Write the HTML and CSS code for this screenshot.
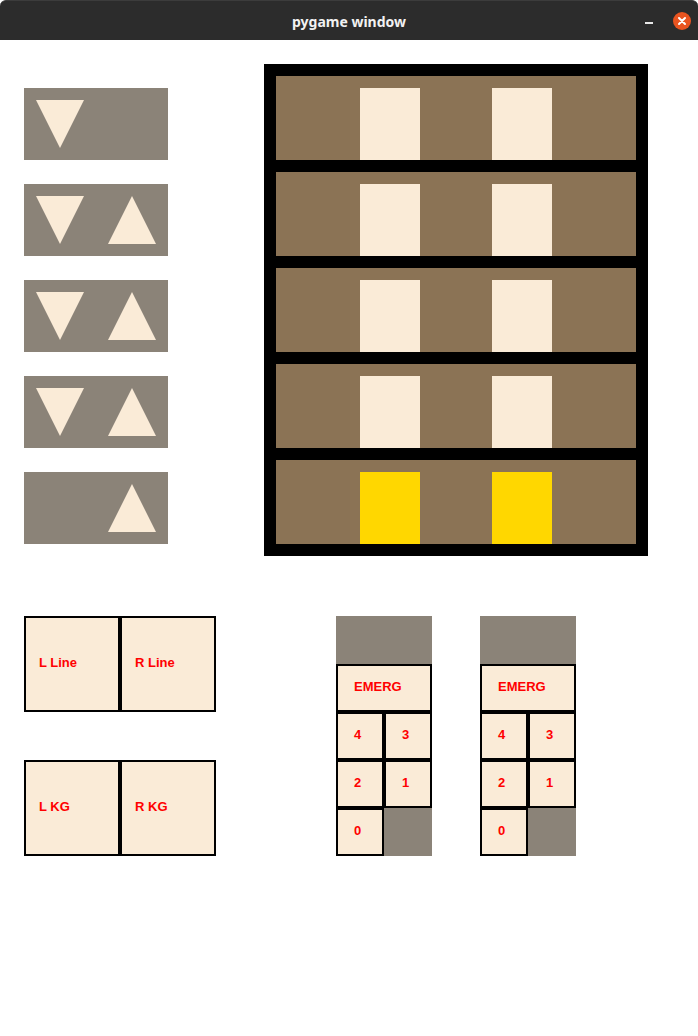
FILE: index.html
```html
<!DOCTYPE html>
<html>
<head>
<meta charset="utf-8">
<title>pygame window</title>
<link rel="stylesheet" href="styles.css">
</head>
<body>
<div class="window">
  <header class="titlebar">
    <span class="title">pygame window</span>
    <div class="controls">
      <span class="minimize"></span>
      <span class="close">
        <svg width="18" height="18" viewBox="0 0 18 18"><path d="M6 6 L12 12 M12 6 L6 12" stroke="#fff" stroke-width="2" stroke-linecap="round"/></svg>
      </span>
    </div>
  </header>
  <main class="canvas">
    <section class="top">
      <div class="callpanels">
        <div class="callpanel">
          <svg class="tri" viewBox="0 0 48 48"><polygon points="0,0 48,0 24,48"/></svg>
        </div>
        <div class="callpanel">
          <svg class="tri" viewBox="0 0 48 48"><polygon points="0,0 48,0 24,48"/></svg>
          <svg class="tri" viewBox="0 0 48 48"><polygon points="24,0 48,48 0,48"/></svg>
        </div>
        <div class="callpanel">
          <svg class="tri" viewBox="0 0 48 48"><polygon points="0,0 48,0 24,48"/></svg>
          <svg class="tri" viewBox="0 0 48 48"><polygon points="24,0 48,48 0,48"/></svg>
        </div>
        <div class="callpanel">
          <svg class="tri" viewBox="0 0 48 48"><polygon points="0,0 48,0 24,48"/></svg>
          <svg class="tri" viewBox="0 0 48 48"><polygon points="24,0 48,48 0,48"/></svg>
        </div>
        <div class="callpanel">
          <span class="tri-empty"></span>
          <svg class="tri" viewBox="0 0 48 48"><polygon points="24,0 48,48 0,48"/></svg>
        </div>
      </div>
      <div class="building">
        <div class="floor"><span class="door"></span><span class="door"></span></div>
        <div class="floor"><span class="door"></span><span class="door"></span></div>
        <div class="floor"><span class="door"></span><span class="door"></span></div>
        <div class="floor"><span class="door"></span><span class="door"></span></div>
        <div class="floor"><span class="door active"></span><span class="door active"></span></div>
      </div>
    </section>
    <section class="bottom">
      <div class="info">
        <div class="info-row">
          <div class="box big">L Line</div>
          <div class="box big">R Line</div>
        </div>
        <div class="info-row">
          <div class="box big">L KG</div>
          <div class="box big">R KG</div>
        </div>
      </div>
      <div class="keypads">
        <div class="keypad">
          <div class="box key wide">EMERG</div>
          <div class="box key">4</div>
          <div class="box key">3</div>
          <div class="box key">2</div>
          <div class="box key">1</div>
          <div class="box key">0</div>
        </div>
        <div class="keypad">
          <div class="box key wide">EMERG</div>
          <div class="box key">4</div>
          <div class="box key">3</div>
          <div class="box key">2</div>
          <div class="box key">1</div>
          <div class="box key">0</div>
        </div>
      </div>
    </section>
  </main>
</div>
</body>
</html>
```

FILE: styles.css
```css
* { box-sizing: border-box; }

html, body {
  margin: 0;
  padding: 0;
  background: #ffffff;
}

.window {
  width: 698px;
  height: 1036px;
  background: #ffffff;
}

.titlebar {
  height: 40px;
  background: #2c2c2c;
  border-top: 1px solid #3c3c3c;
  border-radius: 6px 6px 0 0;
  display: flex;
  align-items: center;
  justify-content: center;
  position: relative;
}

.title {
  color: #f2f2f2;
  font-family: "Noto Sans", "DejaVu Sans", sans-serif;
  font-weight: bold;
  font-size: 14px;
  margin-top: 1px;
}

.controls {
  position: absolute;
  right: 7px;
  top: 11px;
  display: flex;
  align-items: center;
  gap: 20px;
}

.minimize {
  width: 8px;
  height: 2px;
  background: #e8e8e8;
  margin-top: 3px;
}

.close {
  width: 18px;
  height: 18px;
  border-radius: 50%;
  background: #e95420;
  display: block;
}

.close svg { display: block; }

.canvas {
  padding: 24px 0 0 24px;
}

.top {
  display: flex;
  align-items: flex-start;
}

.callpanels {
  margin-top: 24px;
  display: flex;
  flex-direction: column;
  gap: 24px;
}

.callpanel {
  width: 144px;
  height: 72px;
  background: #8b8378;
  padding: 12px 12px;
  display: flex;
  gap: 24px;
}

.tri {
  width: 48px;
  height: 48px;
  display: block;
  fill: #faebd7;
}

.tri-empty {
  width: 48px;
  height: 48px;
}

.building {
  margin-left: 96px;
  background: #000000;
  padding: 12px;
  display: flex;
  flex-direction: column;
  gap: 12px;
}

.floor {
  width: 360px;
  height: 84px;
  background: #8b7355;
  padding: 12px 0 0 84px;
  display: flex;
  gap: 72px;
}

.door {
  width: 60px;
  height: 72px;
  background: #faebd7;
}

.door.active {
  background: #ffd700;
}

.bottom {
  margin-top: 60px;
  display: flex;
  align-items: flex-start;
  gap: 120px;
}

.info {
  display: flex;
  flex-direction: column;
  gap: 48px;
}

.info-row {
  display: flex;
}

.box {
  background: #faebd7;
  border: 2px solid #000000;
  color: #ff0000;
  font-family: "Liberation Sans", Arial, sans-serif;
  font-weight: bold;
  font-size: 13px;
  display: flex;
  align-items: center;
  padding-bottom: 3px;
}

.big {
  width: 96px;
  height: 96px;
  padding-left: 13px;
}

.keypads {
  display: flex;
  gap: 48px;
}

.keypad {
  width: 96px;
  height: 240px;
  background: #8b8378;
  padding-top: 48px;
  display: grid;
  grid-template-columns: 48px 48px;
  grid-auto-rows: 48px;
  align-content: start;
}

.key {
  width: 48px;
  height: 48px;
  padding-left: 16px;
}

.key.wide {
  grid-column: span 2;
  width: 96px;
}
```
